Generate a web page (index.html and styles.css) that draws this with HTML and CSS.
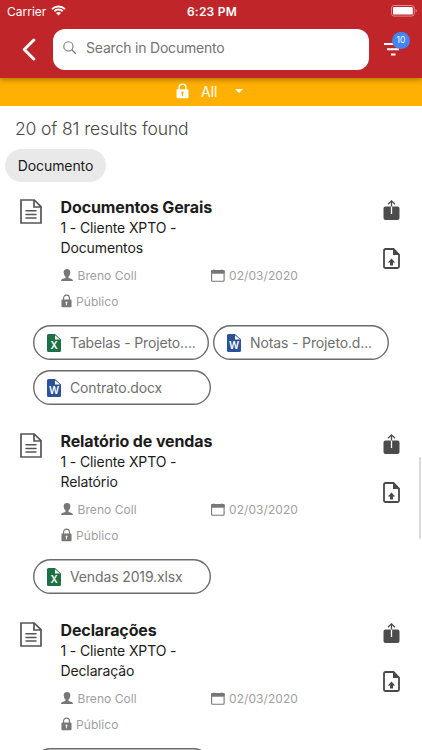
FILE: index.html
```html
<!DOCTYPE html>
<html lang="pt">
<head>
<meta charset="utf-8">
<title>Documento</title>
<link rel="stylesheet" href="styles.css">
</head>
<body>
<svg class="sprite" aria-hidden="true">
  <symbol id="doc" viewBox="0 0 22 25"><path d="M1 1h13.2L21 7.6V24H1z M14 1v7h7" fill="none" stroke="#555" stroke-width="1.7"/><path d="M6 11.7h10M6 15.4h10M6 19.1h10" stroke="#555" stroke-width="1.5" stroke-linecap="round"/></symbol>
  <symbol id="share" viewBox="0 0 16 20"><path d="M2 6.500h12a2 2 0 0 1 2 2V18a2 2 0 0 1-2 2H2a2 2 0 0 1-2-2V8.500a2 2 0 0 1 2-2z" fill="#4c4c4c"/><path d="M8 6v8" stroke="#fff" stroke-width="1.300"/><path d="M8 6.500V1M4.500 4.300 8 .9l3.500 3.400" fill="none" stroke="#4c4c4c" stroke-width="1.300"/></symbol>
  <symbol id="upload" viewBox="0 0 17 21"><path d="M2.500 1h8L16 6.500v12a1.500 1.500 0 0 1-1.500 1.500h-12A1.500 1.500 0 0 1 1 18.500V2.500A1.500 1.500 0 0 1 2.500 1z" fill="none" stroke="#484848" stroke-width="1.800"/><path d="M10 1v6h6zM8.500 10.500 12.200 14.600H10V17.500H7V14.600H4.800z" fill="#484848"/></symbol>
  <symbol id="user" viewBox="0 0 12 12"><path d="M6 0c2.300 0 3.400 1.200 3.300 3.500-.1 1.900-.9 3.300-1.800 4.100v1.200c.5.700 4.500.8 4.500 3.200H0c0-2.400 4-2.500 4.500-3.200V7.600C3.600 6.800 2.800 5.400 2.700 3.500 2.600 1.200 3.700 0 6 0z" fill="#777"/></symbol>
  <symbol id="lock" viewBox="0 0 12 14"><path d="M2.800 6V3.800a3.200 3.200 0 0 1 6.400 0V6" fill="none" stroke="currentColor" stroke-width="1.200"/><rect x=".5" y="5.400" width="11" height="8.400" rx="1" fill="currentColor"/><path class="keyhole" d="M6 9v2.700"/><circle class="keydot" cx="6" cy="8.600" r="1.100"/></symbol>
  <symbol id="date" viewBox="0 0 14 13"><rect x=".6" y="1.600" width="12.500" height="10.600" rx="1" fill="none" stroke="#777" stroke-width="1.100"/><path d="M.5 1.500h12.700v2.800H.5zM2.800.3v1.500M10.800.3v1.500" fill="#777" stroke="#777" stroke-width=".8"/></symbol>
  <symbol id="sheet" viewBox="0 0 14 18"><path d="M1.500 0H8l6 5.500v11a1.500 1.500 0 0 1-1.500 1.500h-11A1.500 1.500 0 0 1 0 16.500v-15A1.500 1.500 0 0 1 1.500 0z" fill="currentColor"/><path d="M8 1.200V5.500h5z" fill="#fff"/></symbol>
</svg>

<header class="header">
  <div class="status">
    <div class="carrier"><span>Carrier</span>
      <svg width="15" height="11" viewBox="0 0 15 11"><path d="M1 4.100a9.300 9.300 0 0 1 13 0M3.300 6.300a6 6 0 0 1 8.400 0" fill="none" stroke="#fff" stroke-width="2"/><path d="M5 8.100a3.600 3.600 0 0 1 5 0L7.500 10.600z" fill="#fff"/></svg>
    </div>
    <div class="time">6:23 PM</div>
    <div class="power"><svg width="26" height="12" viewBox="0 0 26 12"><rect x=".5" y=".5" width="22.800" height="10.600" rx="2.600" fill="none" stroke="#e28a8c"/><rect x="2" y="2" width="19.800" height="7.600" rx="1.200" fill="#fff"/><path d="M24.600 4v3.600q1.200-.6 1.200-1.800t-1.200-1.800z" fill="#e28a8c"/></svg></div>
  </div>
  <div class="searchbar">
    <svg class="back" width="14" height="23" viewBox="0 0 14 23"><path d="M11.800 2 2.300 11.500l9.500 9.500" fill="none" stroke="#fff" stroke-width="3" stroke-linecap="round" stroke-linejoin="round"/></svg>
    <div class="field">
      <svg width="14" height="14" viewBox="0 0 14 14"><circle cx="5.400" cy="5.400" r="4.600" fill="none" stroke="#777" stroke-width="1.100"/><path d="m8.800 8.800 4 3.900" stroke="#777" stroke-width="1.300"/></svg>
      <span>Search in Documento</span>
    </div>
    <div class="filter">
      <svg width="18" height="13" viewBox="0 0 18 13"><path d="M0 1h18M3 6.200h12M7 11.500h4.500" stroke="#fff" stroke-width="1.900"/></svg>
      <span class="badge">10</span>
    </div>
  </div>
</header>

<div class="scope">
  <svg width="13" height="16"><use href="#lock"/></svg>
  <span>All</span>
  <svg class="caret" width="8" height="4" viewBox="0 0 8 4"><path d="M0 0h8L4 4z" fill="#fff"/></svg>
</div>

<main class="results">
  <h1 class="count">20 of 81 results found</h1>
  <div class="tag">Documento</div>

  <article class="item">
    <div class="summary">
      <svg class="kind"><use href="#doc"/></svg>
      <div class="body">
        <h2>Documentos Gerais</h2>
        <p class="path">1 - Cliente XPTO -<br>Documentos</p>
        <div class="meta">
          <span class="author"><svg class="i-user"><use href="#user"/></svg>Breno Coll</span>
          <span class="date"><svg class="i-date"><use href="#date"/></svg>02/03/2020</span>
          <span class="access"><svg class="i-lock"><use href="#lock"/></svg>Público</span>
        </div>
      </div>
      <div class="actions"><svg class="i-share"><use href="#share"/></svg><svg class="i-upload"><use href="#upload"/></svg></div>
    </div>
    <div class="files">
      <div class="file clipped"><svg class="xls" viewBox="0 0 14 18"><use href="#sheet"/><text x="7" y="15.300">X</text></svg><span>Tabelas - Projeto....</span></div>
      <div class="file clipped"><svg class="word" viewBox="0 0 14 18"><use href="#sheet"/><text x="7" y="15.300">W</text></svg><span>Notas - Projeto.d...</span></div>
      <div class="file"><svg class="word" viewBox="0 0 14 18"><use href="#sheet"/><text x="7" y="15.300">W</text></svg><span>Contrato.docx</span></div>
    </div>
  </article>

  <article class="item">
    <div class="summary">
      <svg class="kind"><use href="#doc"/></svg>
      <div class="body">
        <h2>Relatório de vendas</h2>
        <p class="path">1 - Cliente XPTO -<br>Relatório</p>
        <div class="meta">
          <span class="author"><svg class="i-user"><use href="#user"/></svg>Breno Coll</span>
          <span class="date"><svg class="i-date"><use href="#date"/></svg>02/03/2020</span>
          <span class="access"><svg class="i-lock"><use href="#lock"/></svg>Público</span>
        </div>
      </div>
      <div class="actions"><svg class="i-share"><use href="#share"/></svg><svg class="i-upload"><use href="#upload"/></svg></div>
    </div>
    <div class="files">
      <div class="file"><svg class="xls" viewBox="0 0 14 18"><use href="#sheet"/><text x="7" y="15.300">X</text></svg><span>Vendas 2019.xlsx</span></div>
    </div>
  </article>

  <article class="item">
    <div class="summary">
      <svg class="kind"><use href="#doc"/></svg>
      <div class="body">
        <h2>Declarações</h2>
        <p class="path">1 - Cliente XPTO -<br>Declaração</p>
        <div class="meta">
          <span class="author"><svg class="i-user"><use href="#user"/></svg>Breno Coll</span>
          <span class="date"><svg class="i-date"><use href="#date"/></svg>02/03/2020</span>
          <span class="access"><svg class="i-lock"><use href="#lock"/></svg>Público</span>
        </div>
      </div>
      <div class="actions"><svg class="i-share"><use href="#share"/></svg><svg class="i-upload"><use href="#upload"/></svg></div>
    </div>
    <div class="files">
      <div class="file"></div>
    </div>
  </article>
</main>
<div class="scrollbar"></div>
</body>
</html>
```
FILE: styles.css
```css
* { box-sizing: border-box; }
body {
  margin: 0;
  width: 422px;
  height: 750px;
  overflow: hidden;
  position: relative;
  display: flex;
  flex-direction: column;
  background: #fff;
  color: #1c1c1c;
  font-family: Inter, "Liberation Sans", sans-serif;
}
svg { display: block; flex: none; }
.sprite { position: absolute; width: 0; height: 0; }
h1, h2, p { margin: 0; }

.header {
  flex: none;
  height: 78px;
  background: #c02629;
  color: #fff;
  position: relative;
  box-shadow: 0 2px 5px rgba(90, 50, 0, .45);
}
.status {
  display: grid;
  grid-template-columns: 1fr auto 1fr;
  align-items: center;
  height: 22px;
  padding: 0 5px 0 7px;
  font-size: 12px;
}
.carrier { display: flex; align-items: center; gap: 5px; letter-spacing: 0; }
.carrier svg { margin-top: -1px; }
.time { font-weight: 600; letter-spacing: .25px; }
.power { justify-self: end; }
.searchbar { display: flex; align-items: center; height: 42px; margin-top: 6px; }
.back { margin-left: 22px; }
.field {
  display: flex;
  align-items: center;
  gap: 9px;
  width: 316px;
  height: 41px;
  margin-left: 17px;
  padding: 0 0 3px 10px;
  border-radius: 12px;
  background: #fff;
  color: #737373;
  font-size: 14px;
}
.field span { letter-spacing: -.2px; }
.filter { position: relative; margin-left: 15px; }
.badge {
  position: absolute;
  left: 8px;
  top: -11px;
  width: 18px;
  height: 17px;
  border-radius: 9px;
  background: #4285f4;
  font-size: 8.5px;
  line-height: 17px;
  text-align: center;
}

.scope {
  --hole: #ffb003;
  flex: none;
  display: flex;
  align-items: center;
  height: 28px;
  padding: 0 0 2px 176px;
  background: #ffb003;
  color: #fff;
  font-size: 14px;
}
.scope span { margin: 0 18px 0 12px; }
.keyhole { stroke: var(--hole); stroke-width: 1; }
.keydot { fill: var(--hole); }

.results { flex: none; height: 644px; overflow: hidden; }
.count {
  height: 43px;
  padding: 12px 0 0 15px;
  font-size: 17.5px;
  line-height: 21px;
  font-weight: 300;
  letter-spacing: -.13px;
  color: #484848;
}
.tag {
  width: 101px;
  height: 33px;
  margin: 0 0 8px 5px;
  border-radius: 17px;
  background: #e9e9e9;
  font-size: 14px;
  line-height: 33px;
  letter-spacing: -.1px;
  text-align: center;
}

.item { --hole: #fff; padding-bottom: 19px; }
.summary {
  display: grid;
  grid-template-columns: 41px 304.5px 1fr;
  height: 135px;
  padding: 7px 0 0 19.5px;
}
.kind { width: 22px; height: 25px; margin-top: 2px; }
.body h2 { font-size: 16px; line-height: 21px; font-weight: 700; letter-spacing: -.12px; }
.path { font-size: 14px; line-height: 20.4px; letter-spacing: -.13px; }
.meta {
  display: grid;
  grid-template-columns: 150.5px 1fr;
  grid-auto-rows: 26px;
  margin-top: 3.5px;
  font-size: 12px;
  color: #a0a0a0;
}
.meta span { display: flex; align-items: center; letter-spacing: .07px; }
.i-user { width: 12px; height: 12px; margin-right: 5px; }
.i-date { width: 14px; height: 13px; margin-right: 4px; }
.i-lock { width: 11px; height: 14px; margin-right: 4.5px; color: #777; }
.actions { display: flex; flex-direction: column; gap: 28px; padding: 3px 0 0 18px; }
.i-share { width: 17px; height: 20px; }
.i-upload { width: 17px; height: 21px; }

.files { display: flex; flex-wrap: wrap; gap: 10px 4px; padding: 0 20px 0 33px; }
.file {
  display: flex;
  align-items: center;
  gap: 9px;
  width: 178px;
  height: 35px;
  padding-left: 14px;
  border-radius: 18px;
  box-shadow: inset 0 0 0 1.4px #6b6b6b;
  color: #6f6f6f;
  font-size: 14px;
  letter-spacing: -.13px;
  white-space: nowrap;
}
.clipped { width: 176px; }
.file svg { width: 14px; height: 18px; }
.file text { fill: #fff; font: 600 10px Inter, sans-serif; text-anchor: middle; letter-spacing: 0; }
.xls { color: #1d7044; }
.word { color: #2a5298; }

.scrollbar {
  position: absolute;
  right: 1px;
  top: 457px;
  width: 2px;
  height: 82px;
  border-radius: 1px;
  background: #dadada;
}
```
